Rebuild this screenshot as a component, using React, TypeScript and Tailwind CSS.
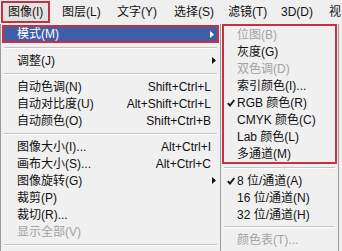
const font = { fontFamily: '"Liberation Sans", "Noto Sans CJK SC", sans-serif' };

const menus = [
  { label: "图像(I)", w: "w-[54px]", active: true },
  { label: "图层(L)", w: "w-[55px]" },
  { label: "文字(Y)", w: "w-[57px]" },
  { label: "选择(S)", w: "w-[54px]" },
  { label: "滤镜(T)", w: "w-[53px]" },
  { label: "3D(D)", w: "w-[48px]" },
  { label: "视", w: "w-[20px]" },
];

function Arrow({ white }: { white?: boolean }) {
  return (
    <svg width="4" height="7" viewBox="0 0 4 7" className="shrink-0">
      <path d="M0 0 L4 3.5 L0 7 Z" fill={white ? "#ffffff" : "#111111"} />
    </svg>
  );
}

function Check() {
  return (
    <svg width="8" height="8" viewBox="0 0 8 8">
      <path d="M0.8 4.2 L3 6.6 L7.3 1" fill="none" stroke="#111" strokeWidth="1.8" />
    </svg>
  );
}

function Sep() {
  return (
    <div className="h-[9px] flex items-center px-[3px]">
      <div className="w-full border-t border-[#c4c4c4] border-b border-b-white" />
    </div>
  );
}

function SubSep() {
  return (
    <div className="h-[8px] flex items-center">
      <div className="w-full border-t border-[#c4c4c4] border-b border-b-white" />
    </div>
  );
}

function Row({
  label,
  shortcut,
  sub,
  disabled,
}: {
  label: string;
  shortcut?: string;
  sub?: boolean;
  disabled?: boolean;
}) {
  return (
    <div
      className={`h-[17px] flex items-center pl-[16px] pr-[4px] text-[12px] whitespace-nowrap ${
        disabled ? "text-[#a3a3a3]" : "text-[#111]"
      }`}
    >
      <span className="flex-1">{label}</span>
      {shortcut && <span className="pr-[5px]">{shortcut}</span>}
      {sub && <Arrow />}
    </div>
  );
}

function SubRow({
  label,
  checked,
  disabled,
}: {
  label: string;
  checked?: boolean;
  disabled?: boolean;
}) {
  return (
    <div
      className={`h-[17px] flex items-center text-[12px] whitespace-nowrap ${
        disabled ? "text-[#a3a3a3]" : "text-[#111]"
      }`}
    >
      <span className="w-[13px] pl-[3px] flex items-center shrink-0">{checked && <Check />}</span>
      <span>{label}</span>
    </div>
  );
}

export default function App() {
  return (
    <div className="w-[342px] h-[251px] overflow-hidden bg-[#f0f0f0]" style={font}>
      <div className="h-[24px] flex items-stretch pl-[1px] text-[12px] text-[#111] bg-[#efefef] whitespace-nowrap">
        {menus.map((m) => (
          <div key={m.label} className={`${m.w} shrink-0 flex py-[1px]`}>
            <div
              className={`flex items-center px-[5px] ${
                m.active ? "border-2 border-[#c9303f] bg-[#e2e2e2]" : "border-2 border-transparent"
              }`}
            >
              {m.label}
            </div>
          </div>
        ))}
      </div>

      <div className="flex">
        <div className="w-[220px] h-[227px] border-l border-[#9a9a9a] pt-[1px]">
          <div className="h-[18px] mx-[1px] border-2 border-[#c9303f] bg-[#3e5ea8] flex items-center pl-[13px] pr-[3px] text-[12px] text-white">
            <span className="flex-1">模式(M)</span>
            <Arrow white />
          </div>
          <Sep />
          <Row label="调整(J)" sub />
          <Sep />
          <Row label="自动色调(N)" shortcut="Shift+Ctrl+L" />
          <Row label="自动对比度(U)" shortcut="Alt+Shift+Ctrl+L" />
          <Row label="自动颜色(O)" shortcut="Shift+Ctrl+B" />
          <Sep />
          <Row label="图像大小(I)..." shortcut="Alt+Ctrl+I" />
          <Row label="画布大小(S)..." shortcut="Alt+Ctrl+C" />
          <Row label="图像旋转(G)" sub />
          <Row label="裁剪(P)" />
          <Row label="裁切(R)..." />
          <Row label="显示全部(V)" disabled />
          <Sep />
        </div>

        <div className="w-[119px] h-[227px] border-l border-r border-[#9a9a9a] bg-[#f0f0f0]">
          <div className="mx-[1px] border-2 border-[#c9303f]">
            <SubRow label="位图(B)" disabled />
            <SubRow label="灰度(G)" />
            <SubRow label="双色调(D)" disabled />
            <SubRow label="索引颜色(I)..." />
            <SubRow label="RGB 颜色(R)" checked />
            <SubRow label="CMYK 颜色(C)" />
            <SubRow label="Lab 颜色(L)" />
            <SubRow label="多通道(M)" />
          </div>
          <div className="px-[3px]">
            <SubSep />
            <SubRow label="8 位/通道(A)" checked />
            <SubRow label="16 位/通道(N)" />
            <SubRow label="32 位/通道(H)" />
            <SubSep />
            <SubRow label="颜色表(T)..." disabled />
          </div>
        </div>
      </div>
    </div>
  );
}
